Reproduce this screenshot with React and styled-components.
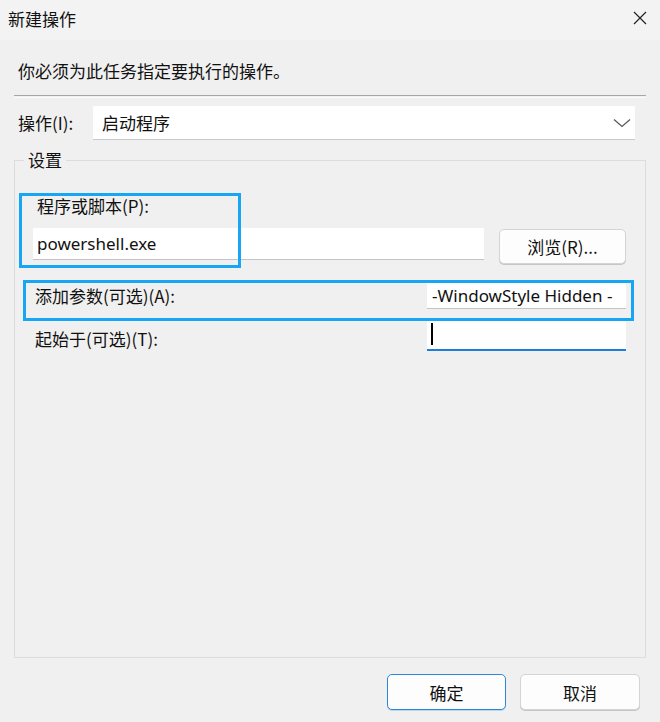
import React from 'react';
import styled, { createGlobalStyle } from 'styled-components';

const GlobalStyle = createGlobalStyle`
  html, body {
    margin: 0;
    padding: 0;
    background: #f0f0f0;
  }
  body {
    font-family: "Noto Sans CJK SC", "Noto Sans", sans-serif;
    color: #111;
  }
`;

const StyledDialog = styled.div`
  width: 660px;
  height: 722px;
  background: #f0f0f0;
  display: flex;
  flex-direction: column;
  overflow: hidden;
`;

const StyledTitleBar = styled.div`
  height: 40px;
  flex: none;
  background: #f3f3f3;
  display: flex;
  align-items: center;
  justify-content: space-between;
  padding: 0 13px 4px 8px;
  box-sizing: border-box;
  font-size: 17px;
  color: #111;
`;

const StyledBody = styled.div`
  flex: 1;
  display: flex;
  flex-direction: column;
  padding: 20px 14px 0 14px;
`;

const StyledInstruction = styled.div`
  font-size: 17px;
  line-height: 22px;
  height: 22px;
  padding-left: 4px;
`;

const StyledSeparator = styled.div`
  margin-top: 13px;
  height: 1px;
  border-top: 1px solid #a6a6a6;
  border-bottom: 1px solid #fbfbfb;
`;

const StyledActionRow = styled.div`
  margin-top: 8px;
  display: flex;
  align-items: center;
  padding-left: 4px;
`;

const StyledLabel = styled.span`
  font-size: 17px;
  line-height: 20px;
  white-space: nowrap;
  width: ${(p) => p.width || 'auto'};
  padding-left: ${(p) => p.indent || 0}px;
  padding-top: ${(p) => p.drop || 0}px;
`;

const StyledCombo = styled.div`
  width: 542px;
  height: 34px;
  box-sizing: border-box;
  background: #fff;
  border-bottom: 1px solid #c8c8c8;
  display: flex;
  align-items: center;
  justify-content: space-between;
  padding: 0 4px 0 9px;
  font-size: 17px;
`;

const StyledGroup = styled.fieldset`
  position: relative;
  margin: 10px 0 0 0;
  padding: 26px 19px 0 18px;
  height: 508px;
  border: 1px solid #dcdcdc;
  box-sizing: border-box;

  legend {
    margin-left: -9px;
    padding: 0 4px;
    font-size: 17px;
    line-height: 20px;
  }
`;

const StyledField = styled.div`
  display: flex;
  flex-direction: column;
`;

const StyledRow = styled.div`
  display: flex;
  align-items: ${(p) => p.align || 'center'};
  justify-content: space-between;
  gap: 13px;
  margin-top: ${(p) => p.top || 0}px;
`;

const StyledInput = styled.div`
  width: ${(p) => p.width}px;
  height: ${(p) => p.height}px;
  box-sizing: border-box;
  background: #fff;
  border-bottom: ${(p) => (p.focused ? '2px solid #1e7fd6' : '1px solid #c4c4c4')};
  display: flex;
  align-items: center;
  padding-left: ${(p) => p.pad || 4}px;
  font-family: "Noto Sans", sans-serif;
  font-size: 17px;
  color: #111;
  white-space: nowrap;
  overflow: hidden;
`;

const StyledCaret = styled.span`
  width: 2px;
  height: 22px;
  background: #000;
`;

const StyledButton = styled.button`
  width: ${(p) => p.width || 120}px;
  height: ${(p) => p.height || 36}px;
  box-sizing: border-box;
  background: #fdfdfd;
  border: ${(p) => (p.primary ? '1.5px solid #2b87da' : '1px solid #d4d4d4')};
  border-radius: 5px;
  box-shadow: 0 1px 0 ${(p) => (p.primary ? '#b9d6ef' : '#c6c6c6')};
  font-family: "Noto Sans CJK SC", "Noto Sans", sans-serif;
  font-size: 17px;
  color: #111;
  padding: 0;
  margin-top: ${(p) => p.top || 0}px;
`;

const StyledHighlight = styled.div`
  position: absolute;
  border: 3px solid #17a6f4;
  box-sizing: border-box;
  pointer-events: none;
`;

const StyledFooter = styled.div`
  display: flex;
  justify-content: flex-end;
  gap: 14px;
  padding: 16px 6px 0 0;
`;

const CloseIcon = () => (
  <svg width="14" height="14" viewBox="0 0 14 14">
    <path d="M1 1 L13 13 M13 1 L1 13" stroke="#222" strokeWidth="1.2" fill="none" />
  </svg>
);

const ChevronIcon = () => (
  <svg width="18" height="10" viewBox="0 0 18 10">
    <path d="M1 1.5 L9 8.5 L17 1.5" stroke="#5a5a5a" strokeWidth="1.3" fill="none" />
  </svg>
);

const App = () => (
  <StyledDialog>
    <GlobalStyle />
    <StyledTitleBar>
      <span>新建操作</span>
      <CloseIcon />
    </StyledTitleBar>
    <StyledBody>
      <StyledInstruction>你必须为此任务指定要执行的操作。</StyledInstruction>
      <StyledSeparator />
      <StyledActionRow>
        <StyledLabel width="75px">操作(I):</StyledLabel>
        <StyledCombo>
          <span>启动程序</span>
          <ChevronIcon />
        </StyledCombo>
      </StyledActionRow>
      <StyledGroup>
        <legend>设置</legend>
        <StyledField>
          <StyledLabel indent={4}>程序或脚本(P):</StyledLabel>
          <StyledRow align="flex-start" top={12}>
            <StyledInput width={451} height={32}>powershell.exe</StyledInput>
            <StyledButton width={127} height={35} top={1}>浏览(R)...</StyledButton>
          </StyledRow>
        </StyledField>
        <StyledRow top={18}>
          <StyledLabel indent={2}>添加参数(可选)(A):</StyledLabel>
          <StyledInput width={199} height={27} pad={5}>-WindowStyle Hidden -</StyledInput>
        </StyledRow>
        <StyledRow top={10}>
          <StyledLabel indent={2} drop={8}>起始于(可选)(T):</StyledLabel>
          <StyledInput width={199} height={32} focused>
            <StyledCaret />
          </StyledInput>
        </StyledRow>
        <StyledHighlight style={{ left: 4, top: 23, width: 222, height: 75 }} />
        <StyledHighlight style={{ left: 8, top: 110, width: 611, height: 41 }} />
      </StyledGroup>
      <StyledFooter>
        <StyledButton primary width={119}>确定</StyledButton>
        <StyledButton width={120}>取消</StyledButton>
      </StyledFooter>
    </StyledBody>
  </StyledDialog>
);

export default App;
